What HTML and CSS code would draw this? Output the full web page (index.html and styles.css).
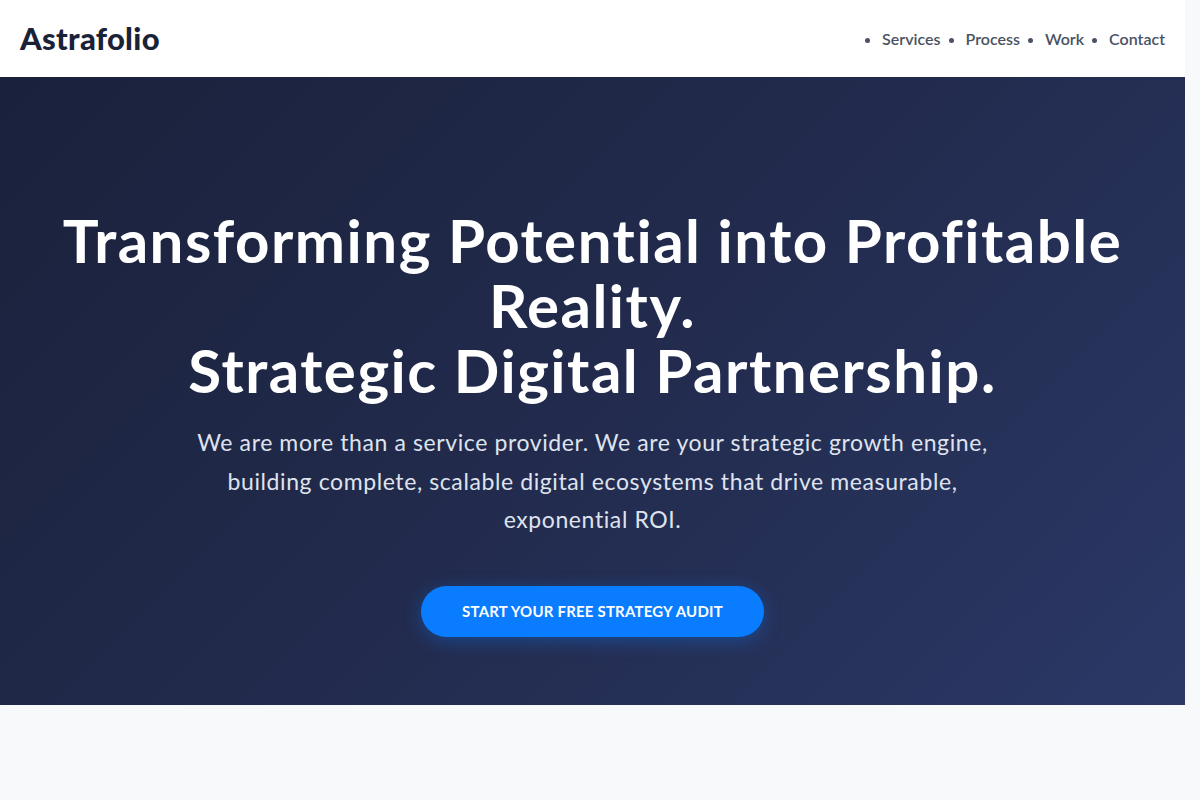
FILE: index.html
```html
<!DOCTYPE html>
<html lang="en">
<head>
<meta charset="utf-8">
<title>Astrafolio</title>
<link rel="stylesheet" href="styles.css">
</head>
<body>
<div class="page">
  <header class="site-header">
    <div class="logo">Astrafolio</div>
    <nav>
      <ul class="nav-list">
        <li><a href="#services">Services</a></li>
        <li><a href="#process">Process</a></li>
        <li><a href="#work">Work</a></li>
        <li><a href="#contact">Contact</a></li>
      </ul>
    </nav>
  </header>
  <section class="hero">
    <h1 class="hero-title">Transforming Potential into Profitable Reality.<br>Strategic Digital Partnership.</h1>
    <p class="hero-text">We are more than a service provider. We are your strategic growth engine, building complete, scalable digital ecosystems that drive measurable, exponential ROI.</p>
    <a class="cta" href="#contact">Start Your Free Strategy Audit</a>
  </section>
  <section class="services" id="services"></section>
</div>
</body>
</html>
```
FILE: styles.css
```css
* { box-sizing: border-box; }
html, body { margin: 0; padding: 0; }
body {
  font-family: Lato, "Open Sans", sans-serif;
  background: #f8f9fb;
  color: #1a2238;
}
.page {
  margin-right: 15px;
}
.site-header {
  display: flex;
  justify-content: space-between;
  align-items: center;
  padding: 20px;
  background: #ffffff;
}
.logo {
  font-size: 31px;
  line-height: 37px;
  font-weight: 900;
  color: #1a2238;
  letter-spacing: 0.3px;
}
.nav-list {
  display: flex;
  gap: 25px;
  margin: 0;
  padding: 0;
  list-style: disc;
  color: #4a5264;
}
.nav-list a {
  color: #4a5264;
  text-decoration: none;
  font-size: 16px;
  font-weight: 600;
}
.hero {
  background: linear-gradient(135deg, #1a213b 0%, #222b4d 50%, #2b3866 100%);
  padding: 131px 40px 68px;
  text-align: center;
  color: #ffffff;
}
.hero-title {
  margin: 0;
  font-size: 60px;
  line-height: 65px;
  font-weight: 700;
  letter-spacing: 1.5px;
}
.hero-text {
  max-width: 820px;
  margin: 20px auto 0;
  font-size: 23px;
  line-height: 38.5px;
  letter-spacing: 0.6px;
  color: #dfe3ee;
}
.cta {
  display: inline-block;
  margin-top: 47px;
  padding: 16px 41px;
  border-radius: 30px;
  background: #0a7cff;
  color: #ffffff;
  font-size: 15px;
  line-height: 19px;
  font-weight: 700;
  text-transform: uppercase;
  letter-spacing: 0.2px;
  text-decoration: none;
  box-shadow: 0 4px 18px rgba(10, 124, 255, 0.35);
}
.services {
  min-height: 400px;
  background: #f8f9fb;
}
```
